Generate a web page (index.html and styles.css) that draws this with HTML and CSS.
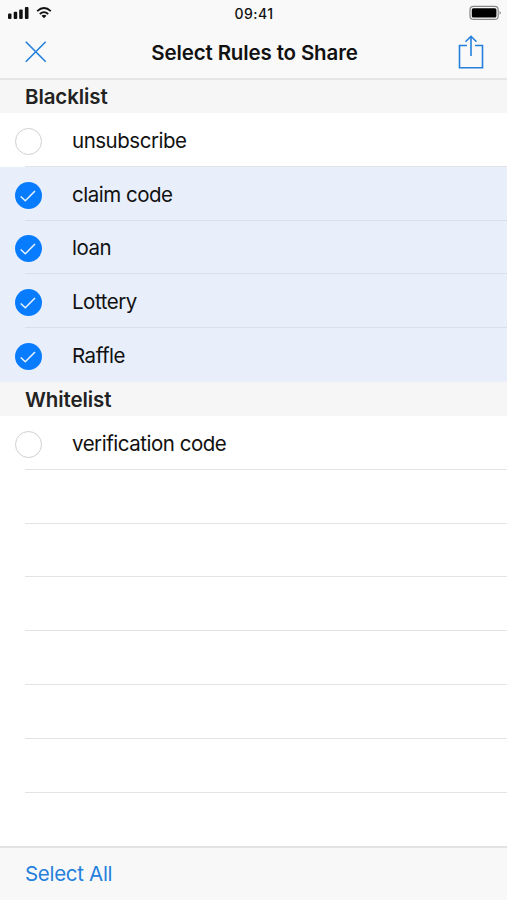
FILE: index.html
```html
<!DOCTYPE html>
<html lang="en">
<head>
<meta charset="utf-8">
<title>Select Rules to Share</title>
<link rel="stylesheet" href="styles.css">
</head>
<body>
<div class="screen">
  <header class="header">
    <div class="status">
      <svg class="signals" width="46" height="16" viewBox="0 0 46 16">
        <g fill="#111"><rect x="0" y="9.5" width="3.5" height="5.5" rx="1"/><rect x="5.7" y="7.8" width="3.5" height="7.2" rx="1"/><rect x="11.2" y="5.5" width="3.5" height="9.5" rx="1"/><rect x="16.9" y="3" width="3.6" height="12" rx="1"/></g>
        <g fill="none" stroke="#111" stroke-width="1.800"><path d="M29.2 7.1Q36 .9 42.8 7.1"/><path d="M31.8 10Q36 6.2 40.2 10"/></g>
        <path d="M33.5 11.7Q36 9.9 38.500 11.700L36 14.200Z" fill="#111"/>
      </svg>
      <time class="clock">09:41</time>
      <svg class="battery" width="33" height="16" viewBox="0 0 33 16">
        <rect x="1" y="2.400" width="28.200" height="13" rx="3.500" fill="none" stroke="#888" stroke-width="1.200"/>
        <rect x="2.800" y="4.200" width="24.600" height="9.400" rx="1.500" fill="#000"/>
        <path d="M30.600 7Q33 8.900 30.600 10.800Z" fill="#777"/>
      </svg>
    </div>
    <div class="nav">
      <button class="icon-button" aria-label="Close"><svg width="22" height="22" viewBox="0 0 22 22"><path d="M.800 .800L20.700 20.700M20.700 .800L.800 20.700"/></svg></button>
      <h1 class="title">Select Rules to Share</h1>
      <button class="icon-button share" aria-label="Share"><svg width="26" height="36" viewBox="0 0 26 36"><path d="M9 11.500H1.500V33.700H24.500V11.500H17M13 22V2.500M7.500 7.800L13 2.300L18.500 7.800"/></svg></button>
    </div>
  </header>
  <main class="rules">
    <h2 class="section first">Blacklist</h2>
    <ul class="list">
      <li class="row"><span class="check"></span><span class="label">unsubscribe</span></li>
      <li class="row selected"><span class="check"><svg viewBox="0 0 27 27"><path d="M5.700 14.500L10.300 18.700L20 9"/></svg></span><span class="label">claim code</span></li>
      <li class="row selected"><span class="check"><svg viewBox="0 0 27 27"><path d="M5.700 14.500L10.300 18.700L20 9"/></svg></span><span class="label">loan</span></li>
      <li class="row selected"><span class="check"><svg viewBox="0 0 27 27"><path d="M5.700 14.500L10.300 18.700L20 9"/></svg></span><span class="label">Lottery</span></li>
      <li class="row selected last"><span class="check"><svg viewBox="0 0 27 27"><path d="M5.700 14.500L10.300 18.700L20 9"/></svg></span><span class="label">Raffle</span></li>
    </ul>
    <h2 class="section">Whitelist</h2>
    <ul class="list">
      <li class="row"><span class="check"></span><span class="label">verification code</span></li>
      <li class="row"></li><li class="row"></li><li class="row"></li><li class="row"></li><li class="row"></li><li class="row"></li><li class="row last"></li>
    </ul>
  </main>
  <footer class="toolbar"><button class="select-all">Select All</button></footer>
</div>
</body>
</html>
```
FILE: styles.css
```css
* { box-sizing: border-box; }
body { margin: 0; background: #fff; color: #111; font-family: Inter, "Liberation Sans", sans-serif; }
button { padding: 0; border: 0; background: none; color: inherit; font: inherit; }
svg { display: block; }
.screen { display: flex; flex-direction: column; width: 507px; height: 900px; overflow: hidden; }
.header { flex: none; height: 80px; background: #f9f9f9; border-bottom: 2px solid #e5e5e6; }
.status { display: grid; grid-template-columns: 1fr auto 1fr; height: 26px; padding: 4px 5px 0 8px; }
.clock { margin-left: -2px; font-size: 14px; font-weight: 500; line-height: 19px; letter-spacing: .5px; }
.battery { justify-self: end; }
.nav { display: grid; grid-template-columns: 1fr auto 1fr; align-items: center; height: 52px; padding: 0 23px 0 25px; }
.icon-button { width: 22px; }
.icon-button svg { fill: none; stroke: #2580dc; stroke-width: 1.600; }
.share { justify-self: end; width: 26px; }
.title { margin: 0; padding-top: 1px; font-size: 20.500px; line-height: 26px; font-weight: 600; letter-spacing: -.14px; white-space: nowrap; }
.section { margin: 0; height: 34px; padding-left: 25px; background: #f6f6f6; color: #222; font-size: 20.500px; line-height: 36px; font-weight: 600; letter-spacing: -.1px; }
.section.first { height: 33px; line-height: 34px; }
.list { margin: 0; padding: 0; list-style: none; }
.row { display: flex; align-items: center; height: 53.800px; padding: 2px 0 0 15px; border-bottom: 1px solid transparent; background: linear-gradient(#e3e3e5, #e3e3e5) 10px 100% / 100% 1px no-repeat border-box; background-position: 25px 100%; }
.row.selected { background-color: #e8effb; background-image: linear-gradient(#d9e0eb, #d9e0eb); }
.row.last { background-image: none; }
.check { flex: none; width: 27px; height: 27px; margin: 2px 30px 0 0; border: 1.500px solid #d0d0d2; border-radius: 50%; background: #fff; }
.selected .check { border: 0; background: #087cff; }
.check svg { fill: none; stroke: #e9f4ff; stroke-width: 1.500; }
.label { padding-top: 1px; font-size: 20.500px; line-height: 26px; letter-spacing: -.48px; white-space: nowrap; }
.toolbar { flex: none; margin-top: auto; height: 54px; padding: 0 25px; border-top: 2px solid #e2e2e3; background: #f8f8f9; }
.select-all { color: #2580dc; font-size: 20.500px; line-height: 52px; letter-spacing: -.3px; }
```
